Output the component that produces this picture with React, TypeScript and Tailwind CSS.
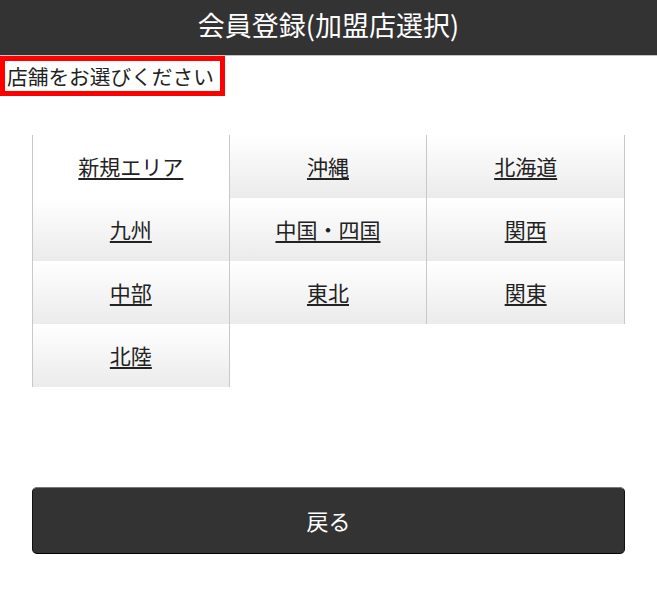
const areas = [
  { name: "新規エリア", plain: true },
  { name: "沖縄" },
  { name: "北海道" },
  { name: "九州" },
  { name: "中国・四国" },
  { name: "関西" },
  { name: "中部" },
  { name: "東北" },
  { name: "関東" },
  { name: "北陸" },
];

export default function App() {
  return (
    <div className="min-h-[592px] bg-white font-['Noto_Sans_CJK_JP','Noto_Sans',sans-serif] text-[#222]">
      {/* ヘッダー */}
      <header className="flex h-[56px] items-center justify-center border-b border-[#c4c4c4] bg-[#333] pb-[4px] text-[27px] text-white">
        会員登録(加盟店選択)
      </header>

      {/* 見出し */}
      <div className="inline-block border-[5px] border-[#ff0000] pl-[2px] pr-[6px] text-[20.7px] leading-[30px]">
        店舗をお選びください
      </div>

      {/* エリア一覧 */}
      <div className="mx-[32px] mt-[39px] grid grid-cols-3">
        {areas.map((a, i) => (
          <div
            key={a.name}
            className={
              "flex h-[63px] items-center justify-center border-r border-[#c8c8c8] " +
              (i % 3 === 0 ? "border-l " : "") +
              (a.plain ? "bg-white" : "bg-linear-to-b from-white to-[#ebebeb]")
            }
          >
            <a href="#" className="text-[21px] text-[#222] underline underline-offset-[3px]">
              {a.name}
            </a>
          </div>
        ))}
      </div>

      {/* 戻るボタン */}
      <div className="mx-[32px] mt-[100px]">
        <button className="flex h-[67px] w-full items-center justify-center rounded-[5px] border border-t-[#777] border-x-[#111] border-b-[#000] bg-[#333] text-[22px] text-white">
          戻る
        </button>
      </div>
    </div>
  );
}
